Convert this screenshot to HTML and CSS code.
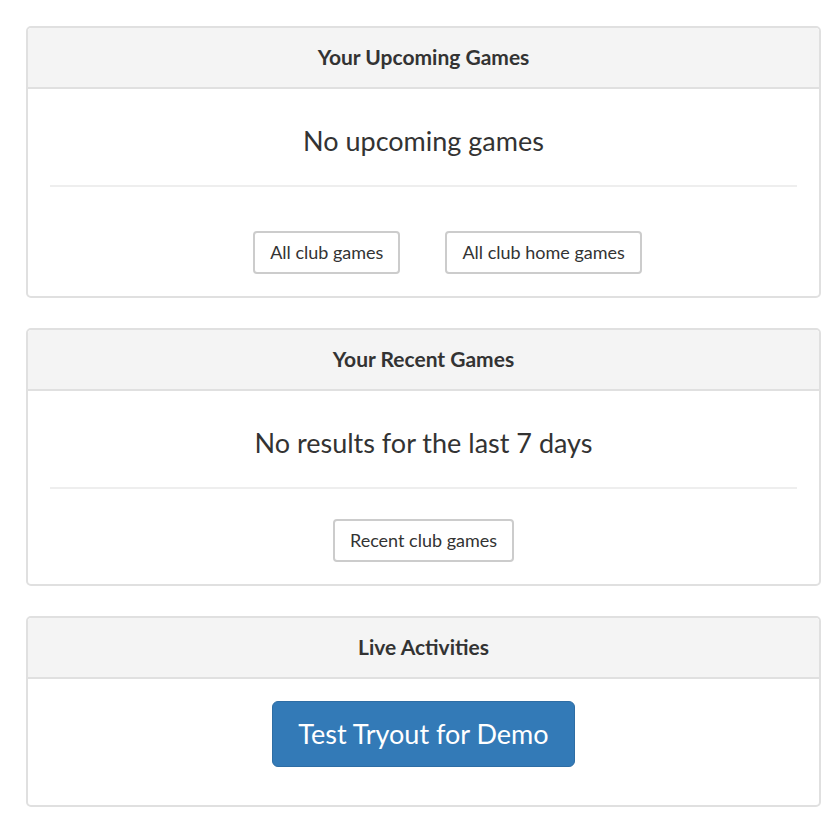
FILE: index.html
```html
<!DOCTYPE html>
<html lang="en">
<head>
    <meta charset="UTF-8">
    <meta name="viewport" content="width=device-width, initial-scale=1.0">
    <title>Dashboard</title>
    <link rel="stylesheet" href="styles.css">
</head>
<body>

    <div class="page">

        <!-- Upcoming games -->
        <div class="panel">
            <div class="panel-heading">Your Upcoming Games</div>
            <div class="panel-body">
                <p class="empty">No upcoming games</p>
                <hr>
                <div class="actions actions-spaced">
                    <a class="btn btn-first" href="#">All club games</a>
                    <a class="btn btn-offset" href="#">All club home games</a>
                </div>
            </div>
        </div>

        <!-- Recent games -->
        <div class="panel">
            <div class="panel-heading">Your Recent Games</div>
            <div class="panel-body">
                <p class="empty">No results for the last 7 days</p>
                <hr>
                <div class="actions">
                    <a class="btn" href="#">Recent club games</a>
                </div>
            </div>
        </div>

        <!-- Live -->
        <div class="panel">
            <div class="panel-heading">Live Activities</div>
            <div class="panel-body panel-body-live">
                <div class="actions">
                    <a class="btn btn-primary btn-lg" href="#">Test Tryout for Demo</a>
                </div>
            </div>
        </div>

    </div>

</body>
</html>
```

FILE: styles.css
```css
body {
    margin: 0;
    font-family: 'Lato', 'Noto Sans', sans-serif;
    color: #333;
    background: #fff;
}

.page {
    padding: 26px 15px 18px 26px;
}

.panel {
    border: 2px solid #e0e0e0;
    border-radius: 5px;
    margin-bottom: 30px;
    background: #fff;
}

.panel-heading {
    background: #f4f4f4;
    border-bottom: 2px solid #e0e0e0;
    border-radius: 4px 4px 0 0;
    height: 59px;
    line-height: 57px;
    text-align: center;
    font-size: 21px;
    font-weight: bold;
}

.panel-body {
    padding: 22px 22px 22px;
}

.panel-body-live {
    padding: 22px 22px 38px;
}

.empty {
    margin: 15px 0 0;
    font-size: 27px;
    line-height: 30px;
    text-align: center;
}

hr {
    border: none;
    border-top: 2px solid #eee;
    margin: 29px 0 30px;
}

.actions {
    display: flex;
    justify-content: center;
}

.actions-spaced {
    margin-top: 44px;
}

.btn {
    display: inline-block;
    box-sizing: border-box;
    height: 43px;
    line-height: 39px;
    padding: 0 15px;
    border: 2px solid #ccc;
    border-radius: 4px;
    font-size: 18px;
    color: #333;
    text-decoration: none;
    background: #fff;
}

.btn-first {
    margin-left: 48px;
}

.btn-offset {
    margin-left: 45px;
}

.btn-primary {
    background: #337ab7;
    border: 1px solid #2e6da4;
    color: #fff;
}

.btn-lg {
    height: 66px;
    line-height: 63px;
    padding: 0 25px;
    font-size: 27px;
    border-radius: 6px;
}
```
